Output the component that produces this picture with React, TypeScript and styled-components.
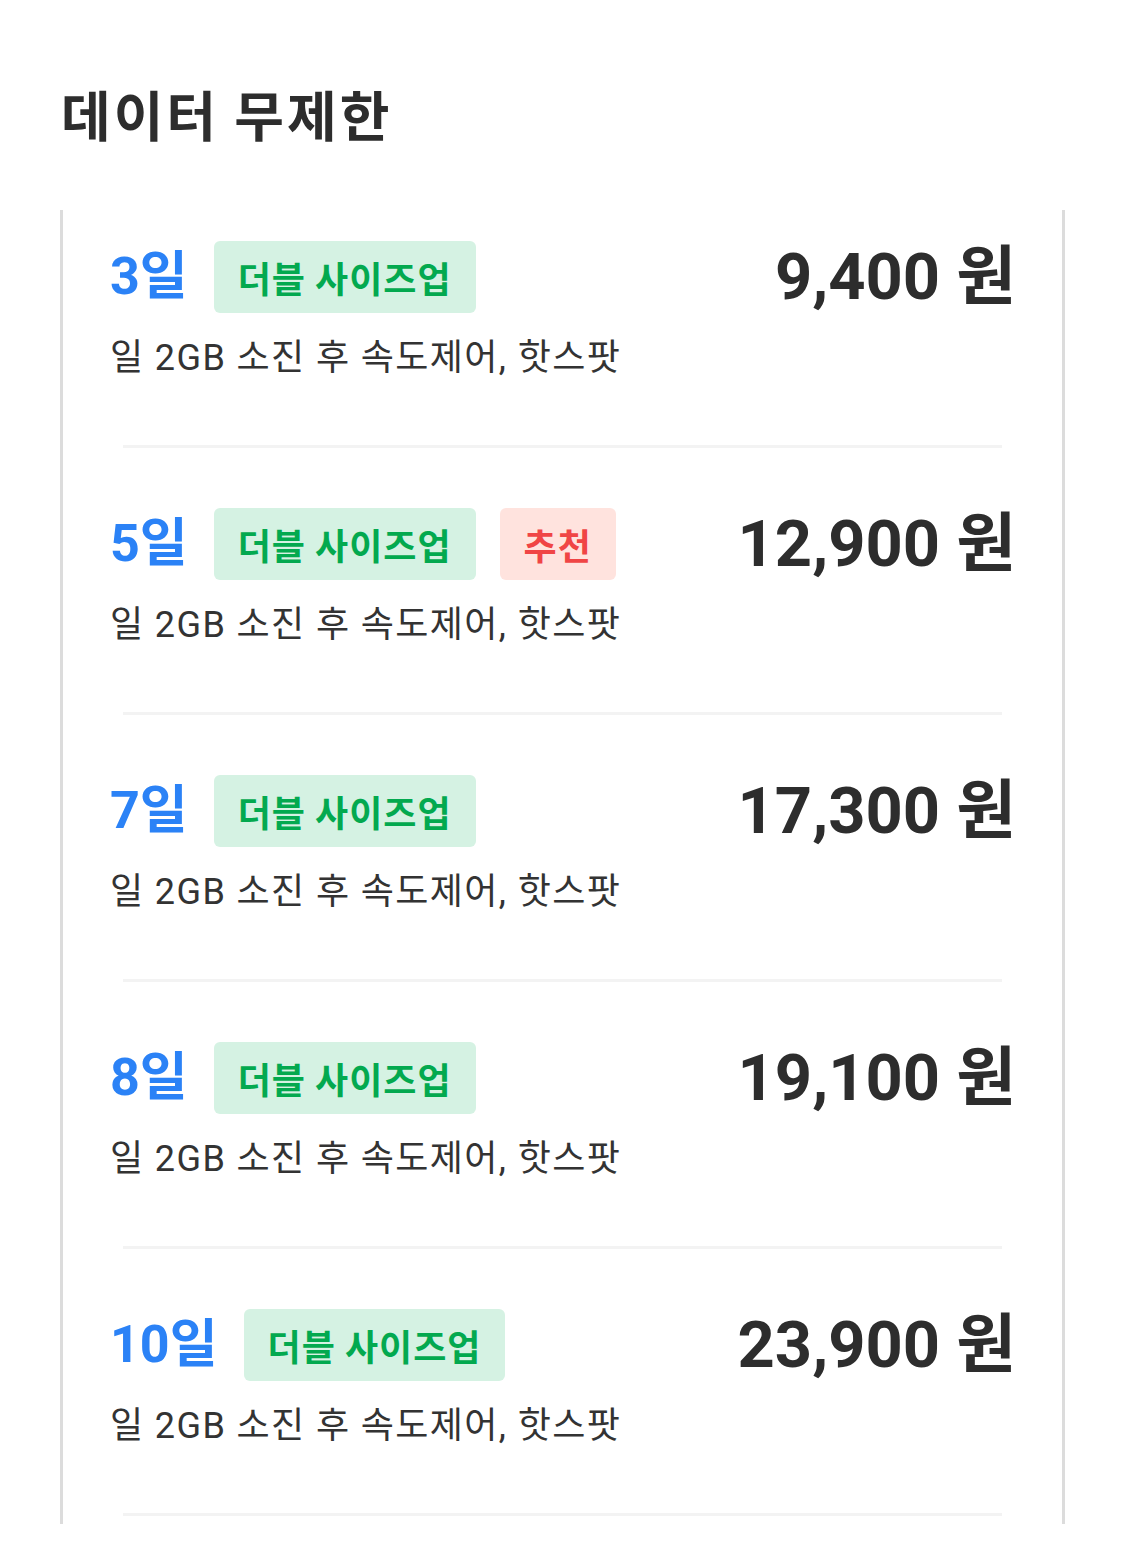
import React from "react";
import styled, { createGlobalStyle } from "styled-components";

const Global = createGlobalStyle`
  html, body { margin: 0; padding: 0; background: #ffffff; }
  body { font-family: Roboto, "Noto Sans CJK KR", sans-serif; color: #2d2d2d; }
`;

const Page = styled.div`
  padding: 78px 60px 25px 60px;
  width: 1125px;
  box-sizing: border-box;
`;

const Title = styled.h1`
  margin: 0 0 0 1px;
  font-family: "Noto Sans CJK KR", sans-serif;
  font-size: 54px;
  font-weight: 700;
  line-height: 72px;
  color: #2d2d2d;
  letter-spacing: 3px;
`;

const Card = styled.div`
  margin-top: 60px;
  width: 1005px;
  box-sizing: border-box;
  border-left: 3px solid #dcdcdc;
  border-right: 3px solid #dcdcdc;
  padding-bottom: 8px;
`;

const Row = styled.div<{ $first?: boolean }>`
  display: flex;
  flex-direction: column;
  padding: ${(p) => (p.$first ? "31px" : "60px")} 46px 0 47px;
`;

const Header = styled.div`
  display: flex;
  align-items: center;
  height: 72px;
`;

const Days = styled.span`
  font-family: Roboto, "Noto Sans CJK KR", sans-serif;
  font-size: 52px;
  font-weight: 700;
  color: #2b82f6;
  margin-right: 26px;
  line-height: 72px;
`;

const Badge = styled.span<{ $tone: "green" | "red" }>`
  display: inline-flex;
  align-items: center;
  height: 72px;
  padding: 0 24px;
  margin-right: 24px;
  border-radius: 6px;
  box-sizing: border-box;
  font-family: "Noto Sans CJK KR", sans-serif;
  font-size: 36px;
  font-weight: 700;
  letter-spacing: 1px;
  background: ${(p) => (p.$tone === "green" ? "#d5f2e3" : "#ffe3de")};
  color: ${(p) => (p.$tone === "green" ? "#03a94f" : "#f04545")};
`;

const Price = styled.span`
  margin-left: auto;
  font-family: Roboto, "Noto Sans CJK KR", sans-serif;
  font-size: 65px;
  font-weight: 700;
  color: #2d2d2d;
  line-height: 72px;
`;

const Desc = styled.div`
  margin-top: 21px;
  font-family: Roboto, "Noto Sans CJK KR", sans-serif;
  font-size: 36px;
  font-weight: 400;
  line-height: 48px;
  letter-spacing: 1.4px;
  color: #333333;
  padding-bottom: 63px;
`;

const Divider = styled.div`
  height: 3px;
  margin: 0 60px;
  background: #f3f3f3;
`;

const plans = [
  { days: "3일", price: "9,400 원", rec: false },
  { days: "5일", price: "12,900 원", rec: true },
  { days: "7일", price: "17,300 원", rec: false },
  { days: "8일", price: "19,100 원", rec: false },
  { days: "10일", price: "23,900 원", rec: false },
];

export default function App() {
  return (
    <>
      <Global />
      <Page>
        <Title>데이터 무제한</Title>
        <Card>
          {plans.map((p, i) => (
            <React.Fragment key={p.days}>
              <Row $first={i === 0}>
                <Header>
                  <Days>{p.days}</Days>
                  <Badge $tone="green">더블 사이즈업</Badge>
                  {p.rec && <Badge $tone="red">추천</Badge>}
                  <Price>{p.price}</Price>
                </Header>
                <Desc>일 2GB 소진 후 속도제어, 핫스팟</Desc>
              </Row>
              <Divider />
            </React.Fragment>
          ))}
        </Card>
      </Page>
    </>
  );
}
